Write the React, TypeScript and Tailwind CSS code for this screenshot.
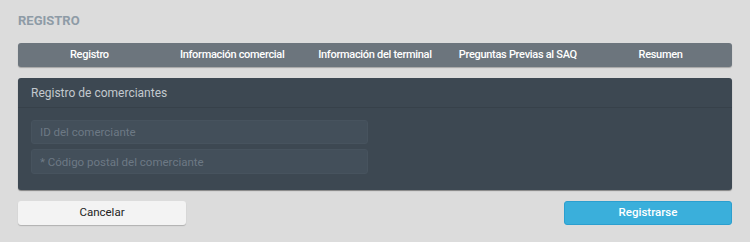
import React from 'react';

const tabs = [
  'Registro',
  'Información comercial',
  'Información del terminal',
  'Preguntas Previas al SAQ',
  'Resumen',
];

export default function App() {
  return (
    <div
      className="min-h-[242px] w-[750px] bg-[#dcdcdc] px-[18px] pt-[13px]"
      style={{ fontFamily: 'Roboto, "Noto Sans", sans-serif' }}
    >
      <h1 className="text-[13px] font-bold leading-[16px] text-[#8e9ba6]">REGISTRO</h1>

      {/* step tabs */}
      <div className="mt-[14px] flex h-[24px] items-center rounded-[3px] bg-[#6c757d] shadow-[0_1px_1px_rgba(0,0,0,0.25)]">
        {tabs.map((t) => (
          <div key={t} className="flex-1 text-center text-[11px] font-medium tracking-[-0.3px] text-white">
            {t}
          </div>
        ))}
      </div>

      {/* merchant card */}
      <div className="mt-[11px] h-[112px] rounded-[3px] bg-[#3d4852] shadow-[0_1px_1px_rgba(0,0,0,0.4)]">
        <div className="flex h-[30px] items-center border-b border-[#37414a] px-[13px] text-[12px] text-[#c3c9ce]">
          Registro de comerciantes
        </div>
        <div className="flex flex-col gap-[5px] px-[13px] pt-[12px]">
          <input
            placeholder="ID del comerciante"
            className="h-[24px] w-[337px] rounded-[3px] border border-[#47535e] bg-[#434f5a] px-[8px] text-[11.5px] text-white outline-none placeholder:text-[#6d7985]"
          />
          <input
            placeholder="* Código postal del comerciante"
            className="h-[25px] w-[337px] rounded-[3px] border border-[#47535e] bg-[#434f5a] px-[8px] text-[11.5px] text-white outline-none placeholder:text-[#6d7985]"
          />
        </div>
      </div>

      <div className="mt-[11px] flex justify-between">
        <button className="h-[24px] w-[168px] rounded-[3px] bg-[#f3f3f3] text-[11.5px] text-[#222] shadow-[0_1px_1px_rgba(0,0,0,0.2)]">
          Cancelar
        </button>
        <button className="h-[24px] w-[168px] rounded-[3px] border border-[#2b9fcf] bg-[#3aafdb] text-[11.5px] font-medium text-white">
          Registrarse
        </button>
      </div>
    </div>
  );
}
